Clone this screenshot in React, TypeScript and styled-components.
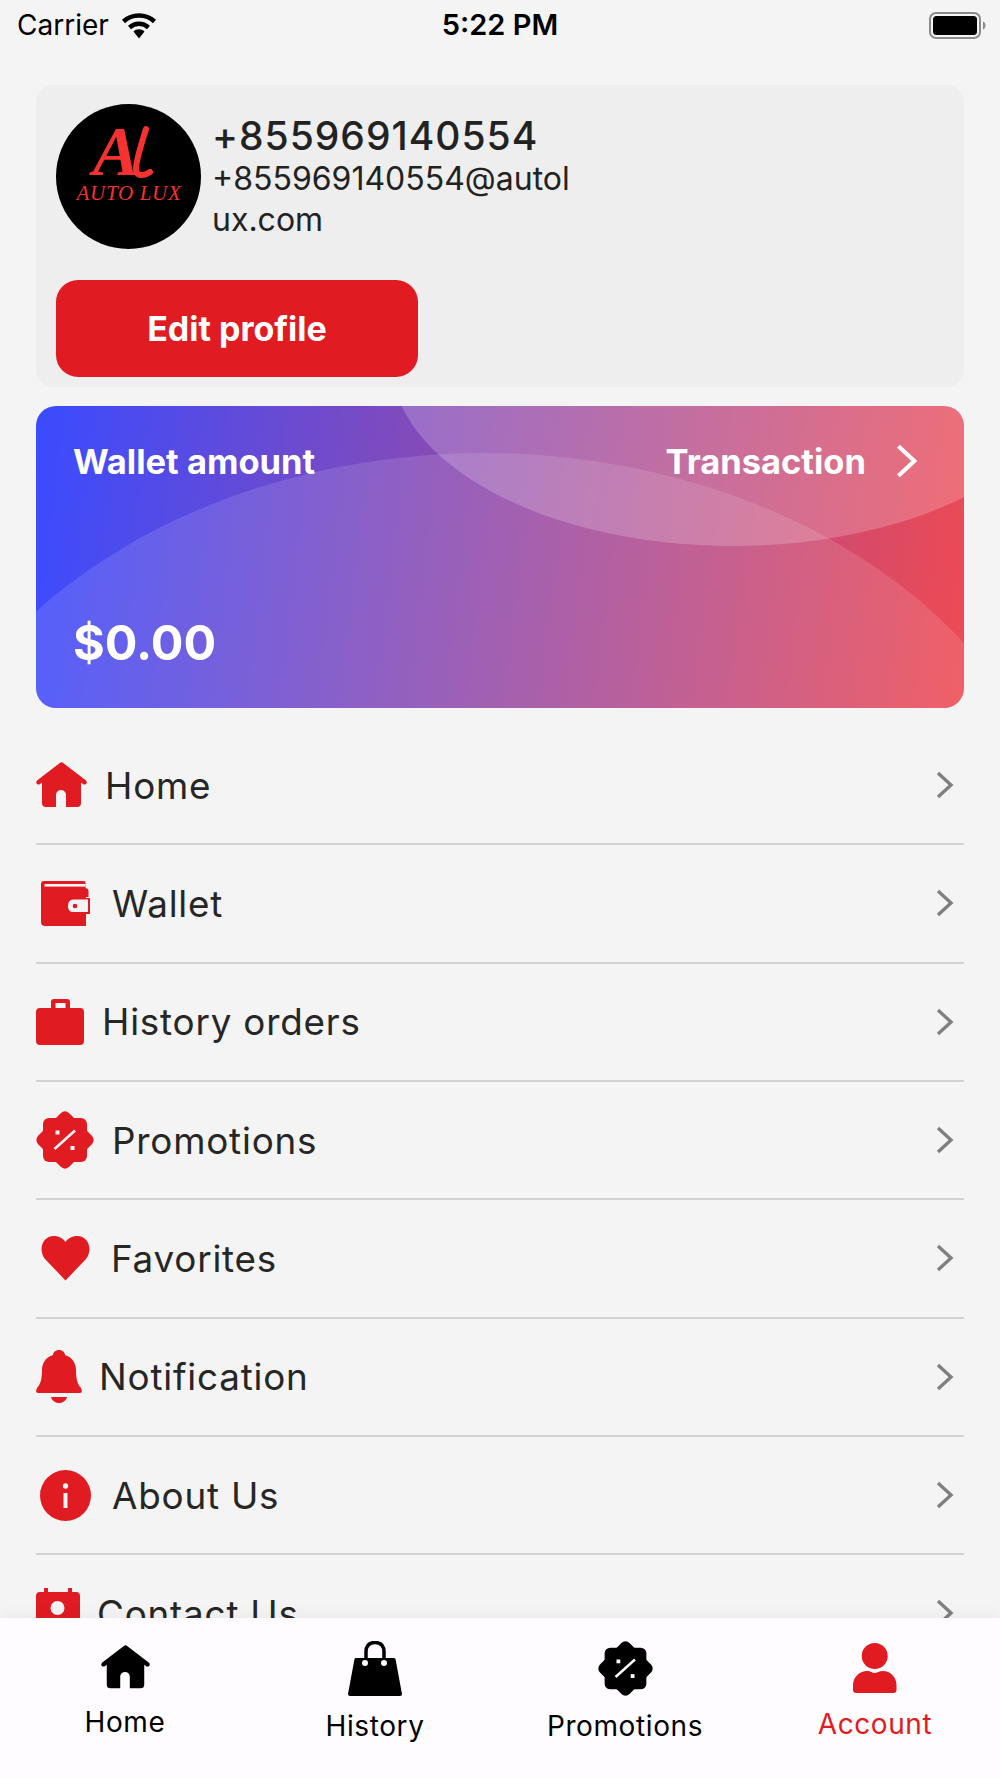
import React from "react";
import styled, { createGlobalStyle } from "styled-components";

const RED = "#e11b22";
const PAGE_BG = "#f4f4f4";

const GlobalStyle = createGlobalStyle`
  html, body {
    margin: 0;
    padding: 0;
    background: ${PAGE_BG};
  }
  * {
    box-sizing: border-box;
  }
`;

const Screen = styled.div`
  width: 1000px;
  height: 1778px;
  display: flex;
  flex-direction: column;
  overflow: hidden;
  background: ${PAGE_BG};
  font-family: Inter, "Liberation Sans", sans-serif;
  color: #222;
`;

const StatusBar = styled.div`
  height: 50px;
  flex: none;
  display: grid;
  grid-template-columns: 1fr auto 1fr;
  align-items: center;
  padding: 0 17px;
  color: #000;
`;

const StatusLeft = styled.div`
  display: flex;
  align-items: center;
  gap: 12px;
  font-size: 28px;
  line-height: 30px;
`;

const StatusTime = styled.div`
  font-size: 29px;
  font-weight: 600;
  line-height: 30px;
`;

const StatusRight = styled.div`
  display: flex;
  justify-content: flex-end;
  margin-right: -3px;
`;

const Scroll = styled.div`
  flex: 1;
  min-height: 0;
  overflow: hidden;
  padding: 35px 36px 0;
`;

const ProfileCard = styled.section`
  height: 302px;
  padding: 19px 20px 10px;
  border-radius: 18px;
  background: #eeeeee;
`;

const ProfileTop = styled.div`
  display: flex;
  gap: 12px;
  height: 145px;
`;

const Avatar = styled.div`
  width: 145px;
  height: 145px;
  flex: none;
  border-radius: 50%;
  background: #000;
  overflow: hidden;
`;

const ProfileText = styled.div`
  width: 362px;
  margin-left: -1px;
  padding-top: 11px;
`;

const Phone = styled.div`
  font-size: 39px;
  line-height: 41px;
  font-weight: 500;
  letter-spacing: 1px;
`;

const Email = styled.div`
  margin-top: 2px;
  font-size: 32px;
  line-height: 41px;
  word-break: break-all;
`;

const EditButton = styled.button`
  display: block;
  width: 362px;
  height: 97px;
  margin-top: 31px;
  border: 0;
  border-radius: 22px;
  background: ${RED};
  color: #fff;
  font-family: inherit;
  font-size: 34px;
  font-weight: 700;
`;

const WalletCard = styled.section`
  position: relative;
  height: 302px;
  margin-top: 19px;
  padding: 35px 37px 38px;
  border-radius: 20px;
  overflow: hidden;
  background: linear-gradient(97deg, #3a4bff 0%, #ef4a52 100%);
  color: #fff;
  display: flex;
  flex-direction: column;
  justify-content: space-between;
`;

const Bubble = styled.div<{ $left: number; $top: number; $w: number; $h: number; $alpha: number }>`
  position: absolute;
  left: ${(p) => p.$left}px;
  top: ${(p) => p.$top}px;
  width: ${(p) => p.$w}px;
  height: ${(p) => p.$h}px;
  border-radius: 50%;
  background: rgba(255, 255, 255, ${(p) => p.$alpha});
`;

const WalletRow = styled.div`
  position: relative;
  display: flex;
  justify-content: space-between;
  align-items: center;
  height: 40px;
  font-size: 34.5px;
  font-weight: 700;
`;

const TransactionLink = styled.div`
  display: flex;
  align-items: center;
  gap: 30px;
  margin-right: 9px;
`;

const WalletAmount = styled.div`
  position: relative;
  font-size: 48.5px;
  line-height: 54px;
  font-weight: 700;
`;

const Menu = styled.ul`
  margin: 19px 0 0;
  padding: 0;
  list-style: none;
`;

const MenuRow = styled.li`
  height: 118.33px;
  display: flex;
  align-items: center;
  border-bottom: 2px solid #d2d2d2;
  padding-right: 10px;
  font-size: 36.8px;
  letter-spacing: 0.8px;
  color: #262626;
`;

const MenuIcon = styled.div<{ $indent: number; $w: number; $gap: number }>`
  flex: none;
  display: flex;
  width: ${(p) => p.$w}px;
  margin-left: ${(p) => p.$indent}px;
  margin-right: ${(p) => p.$gap}px;
`;

const MenuLabel = styled.span`
  flex: 1;
`;

const TabBar = styled.nav`
  position: relative;
  height: 160px;
  flex: none;
  display: grid;
  grid-template-columns: repeat(4, 1fr);
  background: #fffcff;
  box-shadow: 0 -4px 14px rgba(0, 0, 0, 0.04);
`;

const Tab = styled.div<{ $top: number; $gap: number; $active?: boolean }>`
  display: flex;
  flex-direction: column;
  align-items: center;
  padding-top: ${(p) => p.$top}px;
  gap: ${(p) => p.$gap}px;
  color: ${(p) => (p.$active ? RED : "#000")};
  font-size: 28px;
  line-height: 34px;
  letter-spacing: 0.6px;
`;

const HomeIcon = ({ color, width }: { color: string; width: number }) => (
  <svg width={width} viewBox="0 0 51 46" fill={color} display="block">
    <path d="M23.8 1 1 18.5Q-.5 20.5 1 22 2.500 23 4 22L6 20.500V41Q6 45 10 45H20V33A5 5 0 0 1 30 33V45H41Q45 45 45 41V20.500L47 22Q48.500 23 50 22 51.500 20.500 50 18.500L27.200 1Q25.500-.3 23.800 1Z" />
  </svg>
);

const WalletIcon = () => (
  <svg width="49" viewBox="0 0 49 45" display="block">
    <path fill={RED} d="M3 0H43Q44.500 0 44.500 1.500V7Q47.500 7.500 47.500 10V16H45V45H4Q0 45 0 41V3Q0 0 3 0Z" />
    <rect x="3.500" y="3" width="41" height="2.600" fill={PAGE_BG} />
    <path fill={RED} d="M27 17H49V33H27Z" />
    <path fill={PAGE_BG} d="M32 18.500H47V31H32Q27 31 27 25T32 18.500Z" />
    <circle cx="34" cy="25" r="2.300" fill={RED} />
  </svg>
);

const BriefcaseIcon = () => (
  <svg width="48" viewBox="0 0 48 46" display="block">
    <path
      fill={RED}
      fillRule="evenodd"
      d="M15 9V3Q15 0 18 0H31Q34 0 34 3V9H44Q48 9 48 13V42Q48 46 44 46H4Q0 46 0 42V13Q0 9 4 9ZM19.500 4V9H29.500V4Z"
    />
  </svg>
);

const BadgeIcon = ({ color, width, mark }: { color: string; width: number; mark: string }) => (
  <svg width={width} viewBox="0 0 58 58" display="block">
    <rect x="7" y="7" width="44" height="44" rx="6" fill={color} />
    <rect x="7" y="7" width="44" height="44" rx="6" fill={color} transform="rotate(45 29 29)" />
    <path d="M18.500 38 39 19.500" stroke={mark} strokeWidth="2.600" />
    <rect x="19.500" y="19.500" width="4" height="4" fill={mark} />
    <rect x="34.500" y="35" width="4" height="4" fill={mark} />
  </svg>
);

const HeartIcon = () => (
  <svg width="49" viewBox="0 0 49 45" display="block">
    <path fill={RED} d="M24.500 44.500 4 23C-3 14.500 1 0 13 0 18 0 22 2.500 24.500 6 27 2.500 31 0 36 0 48 0 52 14.500 45 23Z" />
  </svg>
);

const BellIcon = () => (
  <svg width="46" viewBox="0 0 46 53" display="block">
    <path
      fill={RED}
      d="M23 0C19.500 0 17 2.500 17 5 10 7 6 13 6 20 6 30 4 35 1 38-.5 41 0 43 2 43H44C46 43 46.500 41 45 38 42 35 40 30 40 20 40 13 36 7 29 5 29 2.500 26.500 0 23 0Z"
    />
    <path fill={RED} d="M15 47H31C30 51 26 53 23 53 20 53 16 51 15 47Z" />
  </svg>
);

const InfoIcon = () => (
  <svg width="51" viewBox="0 0 51 51" display="block">
    <circle cx="25.500" cy="25.500" r="25.500" fill={RED} />
    <circle cx="25.500" cy="16" r="2.700" fill={PAGE_BG} />
    <rect x="23.500" y="23" width="4" height="15" fill={PAGE_BG} />
  </svg>
);

const CalendarIcon = () => (
  <svg width="44" viewBox="0 0 44 50" display="block">
    <path
      fill={RED}
      d="M8 0H12V4H32V0H36V4H40Q44 4 44 8V46Q44 50 40 50H4Q0 50 0 46V8Q0 4 4 4H8Z"
    />
    <circle cx="21.500" cy="20" r="7" fill={PAGE_BG} />
  </svg>
);

const BagIcon = () => (
  <svg width="54" viewBox="0 0 54 55" display="block">
    <path d="M18 17V11Q18 1.500 27 1.500T36 11V17" fill="none" stroke="#000" strokeWidth="3.500" />
    <path
      fill="#000"
      fillRule="evenodd"
      d="M8 17H46Q47.500 17 47.600 18.500L54 53Q54 55 52 55H2Q0 55 0 53L6.400 18.500Q6.500 17 8 17ZM17 19A3 3 0 1 0 17 25 3 3 0 1 0 17 19ZM36 19A3 3 0 1 0 36 25 3 3 0 1 0 36 19Z"
    />
  </svg>
);

const PersonIcon = () => (
  <svg width="44" viewBox="0 0 44 50" display="block">
    <circle cx="21.700" cy="13" r="13" fill={RED} />
    <path
      fill={RED}
      d="M0 47V42C0 34 7 28 14 28 18 28 19 30 21.700 30 24 30 26 28 30 28 37 28 43.500 34 43.500 42V47Q43.500 50 40 50H3.500Q0 50 0 47Z"
    />
  </svg>
);

const Chevron = ({ color, width, height, stroke }: { color: string; width: number; height: number; stroke: number }) => (
  <svg width={width} height={height} viewBox="0 0 18 28" display="block" style={{ flex: "none" }}>
    <path d="M2 2 15 14 2 26" fill="none" stroke={color} strokeWidth={stroke} />
  </svg>
);

const WifiIcon = () => (
  <svg width="36" height="27" viewBox="0 0 36 27" display="block">
    <path d="M2.500 9.500C11 1.500 25 1.500 33.500 9.500" fill="none" stroke="#000" strokeWidth="4.500" />
    <path d="M8.500 15.500C14 10.500 22 10.500 27.500 15.500" fill="none" stroke="#000" strokeWidth="4.500" />
    <path d="M12.500 19.500C15.500 16.500 20.500 16.500 23.500 19.500L18 26.500Z" fill="#000" />
  </svg>
);

const BatteryIcon = () => (
  <svg width="57" height="27" viewBox="0 0 57 27" display="block">
    <rect x="1" y="1" width="50" height="25" rx="6" fill="none" stroke="#8a8a8a" strokeWidth="2" />
    <rect x="4" y="4" width="44" height="19" rx="3.500" fill="#000" />
    <path d="M54 9.500C56 10.500 56.500 12 56.500 13.500S56 16.500 54 17.500Z" fill="#8a8a8a" />
  </svg>
);

const AutoLuxLogo = () => (
  <svg width="145" height="145" viewBox="0 0 145 145" display="block">
    <text
      x="60"
      y="71"
      textAnchor="middle"
      fontFamily="'Liberation Serif', serif"
      fontStyle="italic"
      fontWeight="700"
      fontSize="70"
      fill="#f5322f"
    >
      A
    </text>
    <path d="M90 25C86 38 80 56 80 65 80 73 88 72 94 68" fill="none" stroke="#f5322f" strokeWidth="6" strokeLinecap="round" />
    <text
      x="73"
      y="96"
      textAnchor="middle"
      fontFamily="'Liberation Serif', serif"
      fontStyle="italic"
      fontSize="21"
      letterSpacing="0.7"
      fill="#f5322f"
    >
      AUTO LUX
    </text>
  </svg>
);

const menuItems = [
  { label: "Home", icon: <HomeIcon color={RED} width={51} />, indent: 0, w: 51, gap: 18 },
  { label: "Wallet", icon: <WalletIcon />, indent: 5, w: 49, gap: 22 },
  { label: "History orders", icon: <BriefcaseIcon />, indent: 0, w: 48, gap: 18 },
  { label: "Promotions", icon: <BadgeIcon color={RED} width={58} mark={PAGE_BG} />, indent: 0, w: 58, gap: 18 },
  { label: "Favorites", icon: <HeartIcon />, indent: 5, w: 49, gap: 21 },
  { label: "Notification", icon: <BellIcon />, indent: 0, w: 46, gap: 17 },
  { label: "About Us", icon: <InfoIcon />, indent: 4, w: 51, gap: 21 },
  { label: "Contact Us", icon: <CalendarIcon />, indent: 0, w: 44, gap: 17 },
];

const App: React.FC = () => {
  return (
    <Screen>
      <GlobalStyle />
      <StatusBar>
        <StatusLeft>
          Carrier
          <WifiIcon />
        </StatusLeft>
        <StatusTime>5:22 PM</StatusTime>
        <StatusRight>
          <BatteryIcon />
        </StatusRight>
      </StatusBar>
      <Scroll>
        <ProfileCard>
          <ProfileTop>
            <Avatar>
              <AutoLuxLogo />
            </Avatar>
            <ProfileText>
              <Phone>+855969140554</Phone>
              <Email>+855969140554@autolux.com</Email>
            </ProfileText>
          </ProfileTop>
          <EditButton>Edit profile</EditButton>
        </ProfileCard>
        <WalletCard>
          <Bubble $left={-140} $top={47} $w={1176} $h={900} $alpha={0.12} />
          <Bubble $left={355} $top={-232} $w={684} $h={372} $alpha={0.2} />
          <WalletRow>
            <span>Wallet amount</span>
            <TransactionLink>
              Transaction
              <Chevron color="#fff" width={22} height={36} stroke={3.4} />
            </TransactionLink>
          </WalletRow>
          <WalletAmount>$0.00</WalletAmount>
        </WalletCard>
        <Menu>
          {menuItems.map((item) => (
            <MenuRow key={item.label}>
              <MenuIcon $indent={item.indent} $w={item.w} $gap={item.gap}>
                {item.icon}
              </MenuIcon>
              <MenuLabel>{item.label}</MenuLabel>
              <Chevron color="#808080" width={18} height={28} stroke={3.4} />
            </MenuRow>
          ))}
        </Menu>
      </Scroll>
      <TabBar>
        <Tab $top={27} $gap={16}>
          <HomeIcon color="#000" width={49} />
          Home
        </Tab>
        <Tab $top={23} $gap={13}>
          <BagIcon />
          History
        </Tab>
        <Tab $top={23} $gap={13}>
          <BadgeIcon color="#000" width={55} mark="#fffcff" />
          Promotions
        </Tab>
        <Tab $top={25} $gap={14} $active>
          <PersonIcon />
          Account
        </Tab>
      </TabBar>
    </Screen>
  );
};

export default App;
